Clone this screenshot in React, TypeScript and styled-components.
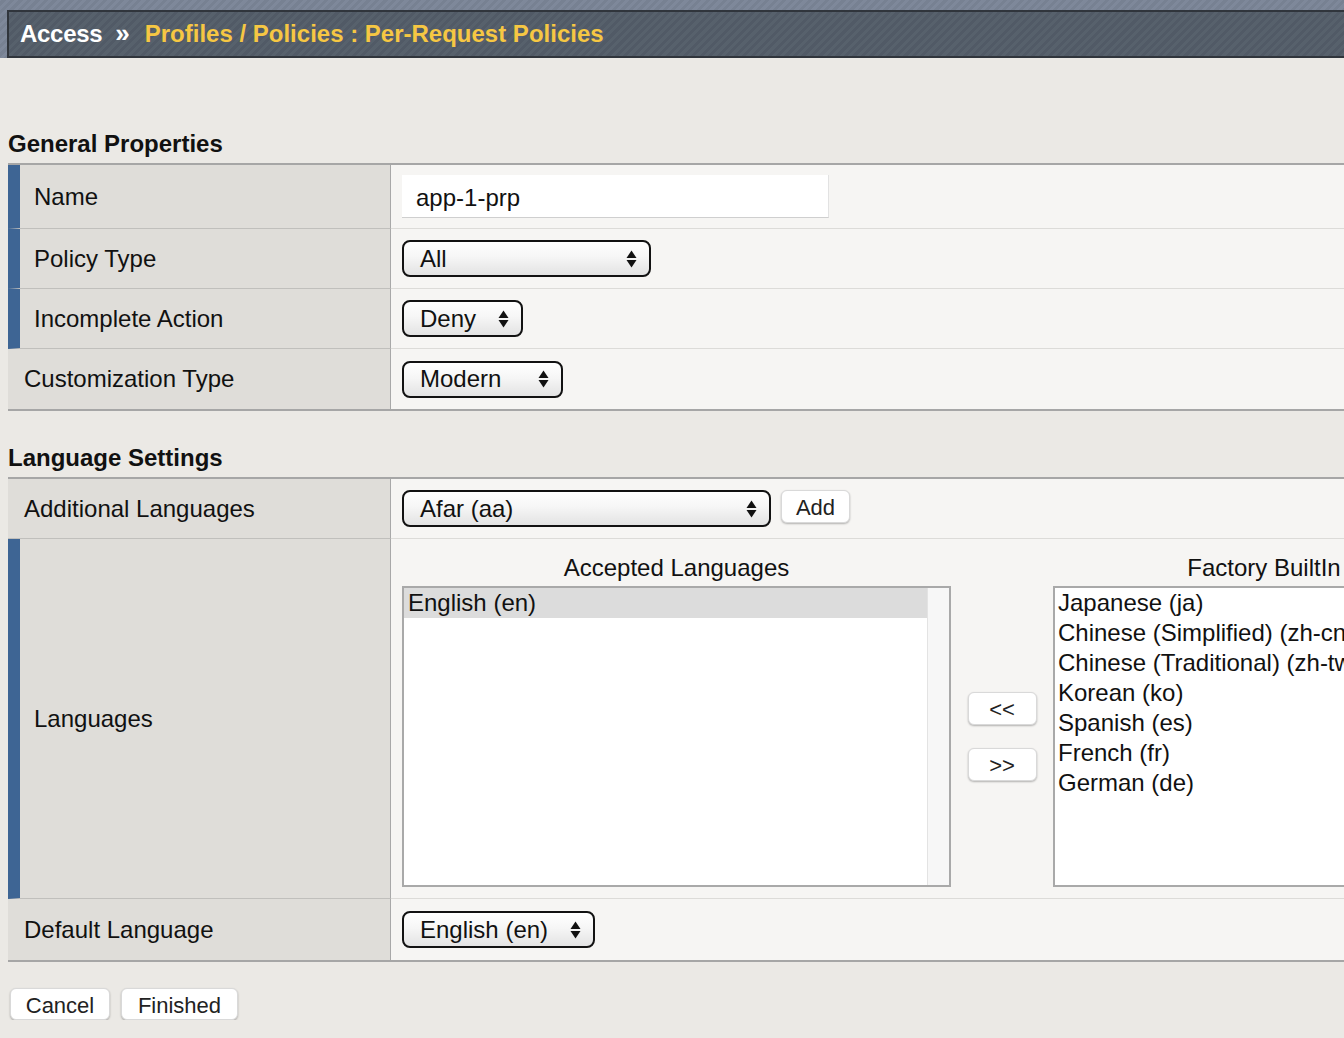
import styled, { createGlobalStyle } from "styled-components";

const GlobalStyle = createGlobalStyle`
  html, body {
    margin: 0;
    padding: 0;
    overflow: hidden;
    background: #ebe9e5;
  }
  body {
    font-family: "Liberation Sans", Arial, Helvetica, sans-serif;
    color: #111;
  }
`;

const Header = styled.header`
  height: 58px;
  box-sizing: border-box;
  padding: 10px 0 0 7px;
  background: repeating-linear-gradient(-45deg, #7e889a 0 3px, #778192 3px 6px);
`;

const TitleBar = styled.div`
  height: 48px;
  box-sizing: border-box;
  border: 2px solid #30353c;
  border-right: none;
  background: repeating-linear-gradient(-45deg, #57616c 0 3px, #515a66 3px 6px);
  display: flex;
  align-items: center;
  padding-left: 11px;
  font-size: 24px;
  font-weight: bold;
  white-space: nowrap;
`;

const Crumb = styled.span`
  color: #ffffff;
  letter-spacing: -0.3px;
`;

const Sep = styled.span`
  color: #ffffff;
  font-size: 26px;
  margin: -2px 15px 0 13px;
`;

const Current = styled.span`
  color: #f6c743;
`;

const Page = styled.main`
  padding-left: 8px;
`;

const SectionTitle = styled.h2<{ $top: number }>`
  margin: ${(p) => p.$top}px 0 5px;
  font-size: 24px;
  line-height: 28px;
  font-weight: bold;
`;

const Table = styled.div`
  width: 1600px;
  border-top: 2px solid #a6a6a6;
  border-bottom: 2px solid #a6a6a6;
`;

const Row = styled.div<{ $h: number }>`
  display: grid;
  grid-template-columns: 383px 1fr;
  height: ${(p) => p.$h}px;

  &:last-child > * {
    border-bottom: none;
  }
`;

const Label = styled.div<{ $required?: boolean }>`
  box-sizing: border-box;
  display: flex;
  align-items: center;
  background: #dfddd9;
  border-right: 1px solid #a8a8a8;
  border-bottom: 1px solid #c0bfbc;
  border-left: ${(p) => (p.$required ? "12px solid #3e6594" : "none")};
  padding-left: ${(p) => (p.$required ? 14 : 16)}px;
  font-size: 24px;
`;

const Value = styled.div<{ $top?: boolean }>`
  box-sizing: border-box;
  display: flex;
  align-items: ${(p) => (p.$top ? "flex-start" : "center")};
  padding: ${(p) => (p.$top ? "15px 0 0 11px" : "0 0 0 11px")};
  background: #f6f5f3;
  border-bottom: 1px solid #dcdbd8;
`;

const TextInput = styled.div`
  box-sizing: border-box;
  width: 427px;
  height: 43px;
  background: #ffffff;
  border-bottom: 1px solid #cfcfcf;
  border-right: 1px solid #e2e2e2;
  padding: 3px 0 0 14px;
  display: flex;
  align-items: center;
  font-size: 24px;
`;

const SelectBox = styled.div<{ $w: number }>`
  box-sizing: border-box;
  width: ${(p) => p.$w}px;
  height: 37px;
  border: 2px solid #121212;
  border-radius: 8px;
  background: linear-gradient(#ffffff 0%, #f6f6f6 45%, #e3e3e3 100%);
  box-shadow: inset 0 1px 0 #ffffff;
  display: flex;
  align-items: center;
  justify-content: space-between;
  padding: 0 12px 0 16px;
  font-size: 24px;
  white-space: nowrap;
`;

const Inline = styled.div`
  display: flex;
  align-items: flex-start;
  gap: 10px;
`;

const Button = styled.button<{ $w: number; $h?: number }>`
  box-sizing: border-box;
  width: ${(p) => p.$w}px;
  height: ${(p) => p.$h ?? 33}px;
  padding: 3px 0 0;
  background: #ffffff;
  border: 1px solid #d9d9d9;
  border-radius: 6px;
  box-shadow: 0 1px 2px rgba(0, 0, 0, 0.28);
  font-family: "Liberation Sans", Arial, sans-serif;
  font-size: 22px;
  color: #222;
  cursor: pointer;
`;

const Lists = styled.div`
  display: flex;
  align-items: flex-start;
`;

const ListColumn = styled.div<{ $w: number }>`
  width: ${(p) => p.$w}px;
  flex: none;
`;

const ListHeader = styled.div`
  height: 28px;
  line-height: 28px;
  margin-bottom: 4px;
  text-align: center;
  font-size: 24px;
`;

const ListBox = styled.div`
  box-sizing: border-box;
  height: 301px;
  border: 2px solid #a9a9a9;
  background: #ffffff;
  display: flex;
`;

const Options = styled.div`
  flex: 1;
`;

const Scrollbar = styled.div`
  width: 21px;
  background: #f7f7f7;
  border-left: 1px solid #e3e3e3;
`;

const Option = styled.div<{ $selected?: boolean; $pad: number }>`
  height: 30px;
  line-height: 30px;
  padding-left: ${(p) => p.$pad}px;
  font-size: 24px;
  white-space: nowrap;
  background: ${(p) => (p.$selected ? "#dcdcdc" : "transparent")};
`;

const MoveColumn = styled.div`
  width: 102px;
  flex: none;
  height: 301px;
  margin-top: 32px;
  display: flex;
  flex-direction: column;
  align-items: center;
  justify-content: center;
  gap: 23px;
`;

const Footer = styled.div`
  display: flex;
  gap: 11px;
  margin: 26px 0 0 2px;
`;

function Arrows() {
  return (
    <svg width="11" height="18" viewBox="0 0 11 18">
      <polygon points="0.5,8 5.5,0.5 10.5,8" fill="#111" />
      <polygon points="0.5,10 5.5,17.5 10.5,10" fill="#111" />
    </svg>
  );
}

function Select({ value, width }: { value: string; width: number }) {
  return (
    <SelectBox $w={width}>
      <span>{value}</span>
      <Arrows />
    </SelectBox>
  );
}

const factory = [
  "Japanese (ja)",
  "Chinese (Simplified) (zh-cn)",
  "Chinese (Traditional) (zh-tw)",
  "Korean (ko)",
  "Spanish (es)",
  "French (fr)",
  "German (de)",
];

export default function App() {
  return (
    <>
      <GlobalStyle />
      <Header>
        <TitleBar>
          <Crumb>Access</Crumb>
          <Sep>»</Sep>
          <Current>Profiles / Policies : Per-Request Policies</Current>
        </TitleBar>
      </Header>
      <Page>
        <SectionTitle $top={72}>General Properties</SectionTitle>
        <Table>
          <Row $h={64}>
            <Label $required>Name</Label>
            <Value>
              <TextInput>app-1-prp</TextInput>
            </Value>
          </Row>
          <Row $h={60}>
            <Label $required>Policy Type</Label>
            <Value>
              <Select value="All" width={249} />
            </Value>
          </Row>
          <Row $h={60}>
            <Label $required>Incomplete Action</Label>
            <Value>
              <Select value="Deny" width={121} />
            </Value>
          </Row>
          <Row $h={60}>
            <Label>Customization Type</Label>
            <Value>
              <Select value="Modern" width={161} />
            </Value>
          </Row>
        </Table>

        <SectionTitle $top={33}>Language Settings</SectionTitle>
        <Table>
          <Row $h={60}>
            <Label>Additional Languages</Label>
            <Value>
              <Inline>
                <Select value="Afar (aa)" width={369} />
                <Button $w={69}>Add</Button>
              </Inline>
            </Value>
          </Row>
          <Row $h={360}>
            <Label $required>Languages</Label>
            <Value $top>
              <Lists>
                <ListColumn $w={549}>
                  <ListHeader>Accepted Languages</ListHeader>
                  <ListBox>
                    <Options>
                      <Option $selected $pad={4}>English (en)</Option>
                    </Options>
                    <Scrollbar />
                  </ListBox>
                </ListColumn>
                <MoveColumn>
                  <Button $w={69}>&lt;&lt;</Button>
                  <Button $w={69}>&gt;&gt;</Button>
                </MoveColumn>
                <ListColumn $w={422}>
                  <ListHeader>Factory BuiltIn</ListHeader>
                  <ListBox>
                    <Options>
                      {factory.map((lang) => (
                        <Option key={lang} $pad={3}>
                          {lang}
                        </Option>
                      ))}
                    </Options>
                  </ListBox>
                </ListColumn>
              </Lists>
            </Value>
          </Row>
          <Row $h={61}>
            <Label>Default Language</Label>
            <Value>
              <Select value="English (en)" width={193} />
            </Value>
          </Row>
        </Table>

        <Footer>
          <Button $w={100} $h={32}>Cancel</Button>
          <Button $w={117} $h={32}>Finished</Button>
        </Footer>
      </Page>
    </>
  );
}
